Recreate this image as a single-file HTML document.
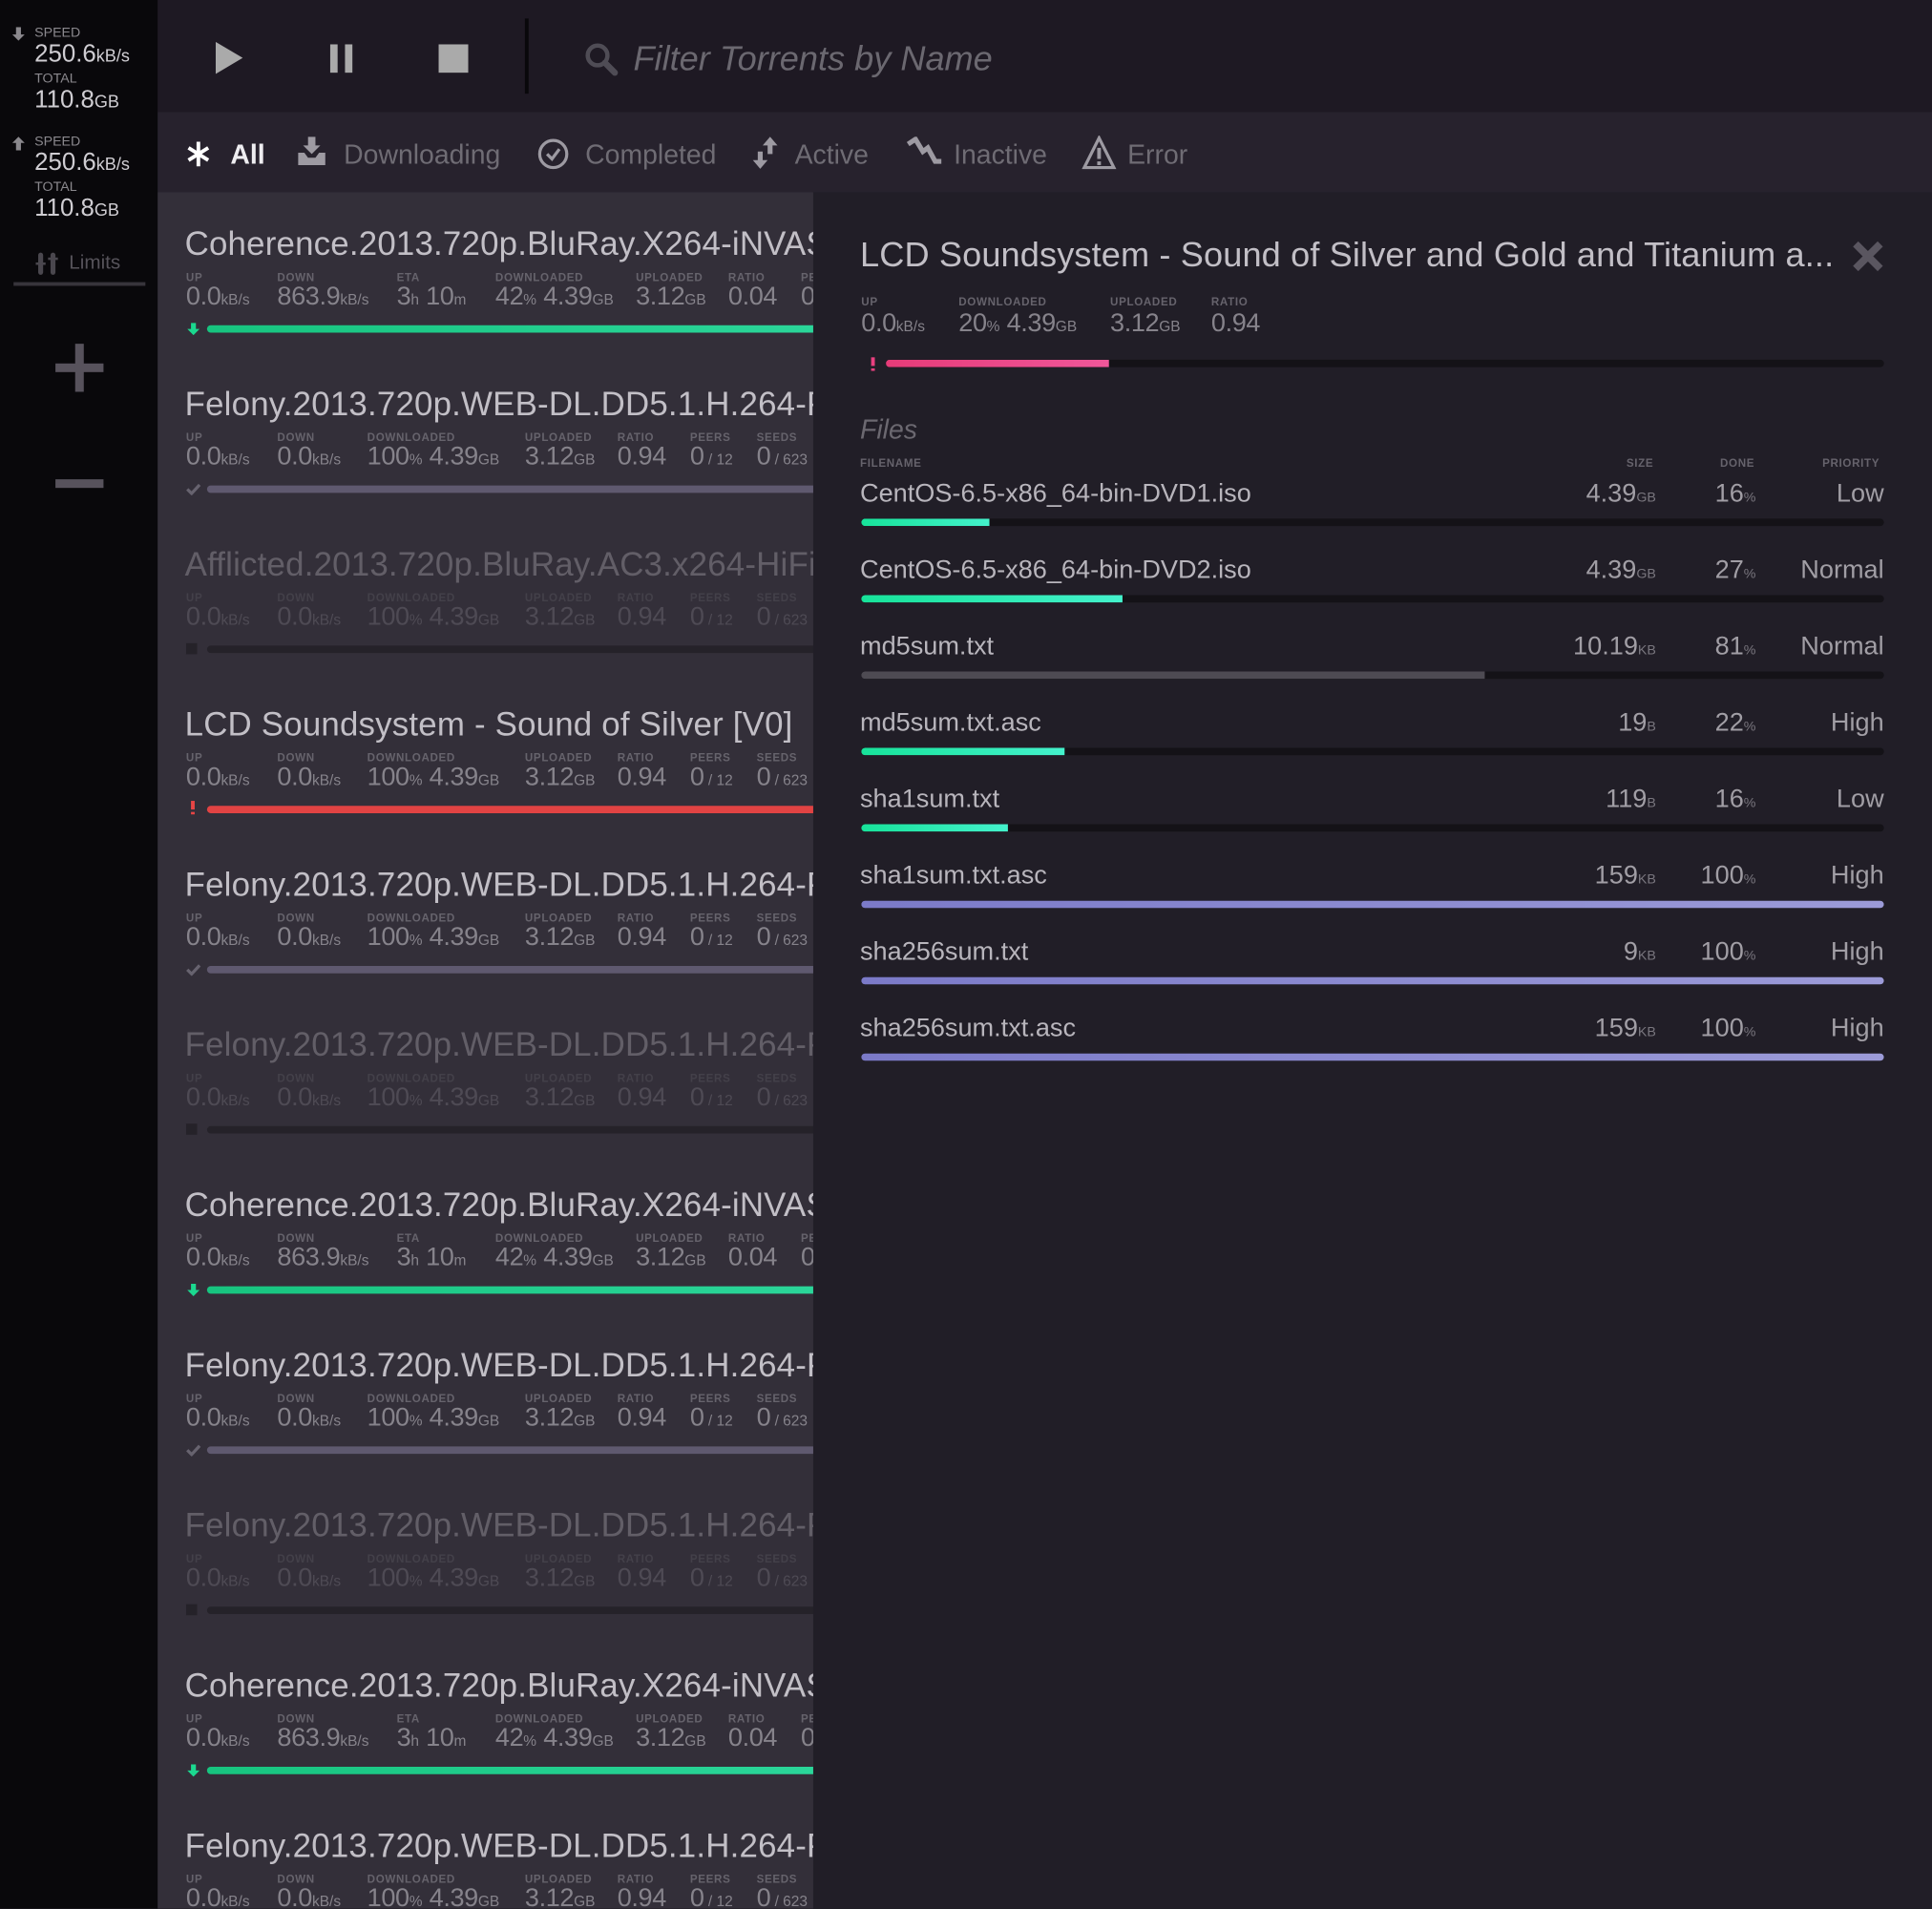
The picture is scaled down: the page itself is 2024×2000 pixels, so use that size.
<!DOCTYPE html>
<html><head><meta charset="utf-8">
<style>
html,body{margin:0;padding:0;background:#211e27;overflow:hidden;width:2024px;height:2000px}
#w{position:absolute;left:0;top:0;width:1568px;height:1549px;transform:scale(1.29082);transform-origin:0 0;font-family:"Liberation Sans",sans-serif;overflow:hidden;background:#211e27}
.a{position:absolute}
.lbl{position:absolute;font-size:9px;font-weight:bold;letter-spacing:.5px;color:#66636c;white-space:nowrap}
.val{position:absolute;font-size:21px;color:#86838b;white-space:nowrap;letter-spacing:-.3px}
.val small{font-size:12px;letter-spacing:0}
.row{position:absolute;left:128px;width:532px;height:130px;overflow:hidden}
.nm{position:absolute;left:22px;top:27px;font-size:27px;color:#c2bfc6;white-space:nowrap;letter-spacing:.15px}
.bar{position:absolute;left:40px;top:108px;width:500px;height:6px;border-radius:3px}
.fade{opacity:.33}
.fr{position:absolute;font-size:21px;color:#a19ea5;text-align:right;white-space:nowrap}
.fr small{font-size:11px;color:#7a777f}
.tr{position:absolute;left:699px;width:830px;height:6px;border-radius:3px;background:#141217;overflow:hidden}
.tr i{display:block;height:6px;border-radius:3px 0 0 3px}
.g{background:linear-gradient(90deg,#17e39a,#44f2cc)}
.p{background:linear-gradient(90deg,#7b7ac8,#9c9bd8)}
.gr{background:#4e4b53}
.flt{position:absolute;top:113px;font-size:22px;color:#6f6c74;white-space:nowrap}
</style></head><body><div id="w">

<div class="a" style="left:0;top:0;width:128px;height:1549px;background:#09080b"></div>
<svg class="a" style="left:9px;top:22px" width="12" height="12" viewBox="0 0 12 12"><path d="M4 0h4v6h3L6 11 1 6h3z" fill="#8a888d"/></svg>
<div class="a" style="left:28px;top:21px;font-size:11px;color:#8a888d">SPEED</div>
<div class="a" style="left:28px;top:33px;font-size:20px;color:#cfcdd2">250.6<span style="font-size:14px">kB/s</span></div>
<div class="a" style="left:28px;top:58px;font-size:11px;color:#8a888d">TOTAL</div>
<div class="a" style="left:28px;top:70px;font-size:20px;color:#cfcdd2">110.8<span style="font-size:14px">GB</span></div>
<svg class="a" style="left:9px;top:110px" width="12" height="12" viewBox="0 0 12 12"><path d="M4 12h4V6h3L6 1 1 6h3z" fill="#8a888d"/></svg>
<div class="a" style="left:28px;top:109px;font-size:11px;color:#8a888d">SPEED</div>
<div class="a" style="left:28px;top:121px;font-size:20px;color:#cfcdd2">250.6<span style="font-size:14px">kB/s</span></div>
<div class="a" style="left:28px;top:146px;font-size:11px;color:#8a888d">TOTAL</div>
<div class="a" style="left:28px;top:158px;font-size:20px;color:#cfcdd2">110.8<span style="font-size:14px">GB</span></div>
<svg class="a" style="left:29px;top:204px" width="20" height="20" viewBox="0 0 20 20"><rect x="2" y="1" width="4" height="18" rx="2" fill="#4a474e"/><rect x="12" y="1" width="4" height="18" rx="2" fill="#4a474e"/><rect x="0" y="9" width="8" height="2" fill="#4a474e"/><rect x="10" y="5" width="8" height="2" fill="#4a474e"/></svg>
<div class="a" style="left:56px;top:205px;font-size:16px;color:#56535a">Limits</div>
<div class="a" style="left:11px;top:229px;width:107px;height:3px;background:#37343b"></div>
<div class="a" style="left:45px;top:295px;width:39px;height:7px;background:#57525c"></div>
<div class="a" style="left:61px;top:279px;width:7px;height:39px;background:#57525c"></div>
<div class="a" style="left:45px;top:389px;width:39px;height:7px;background:#57525c"></div>

<div class="a" style="left:128px;top:0;width:1440px;height:91px;background:#1e1923"></div>
<svg class="a" style="left:175px;top:34px" width="22" height="26"><path d="M0 0L22 13L0 26z" fill="#aaa"/></svg>
<div class="a" style="left:268px;top:36px;width:6px;height:23px;background:#aaa"></div>
<div class="a" style="left:280px;top:36px;width:6px;height:23px;background:#aaa"></div>
<div class="a" style="left:356px;top:36px;width:24px;height:23px;background:#aaa"></div>
<div class="a" style="left:426px;top:15px;width:3px;height:61px;background:#09080b"></div>
<svg class="a" style="left:474px;top:34px" width="28" height="28" viewBox="0 0 28 28"><circle cx="11" cy="11" r="8" fill="none" stroke="#4f4c55" stroke-width="3.5"/><path d="M17 17l8 8" stroke="#4f4c55" stroke-width="5" stroke-linecap="round"/></svg>
<div class="a" style="left:514px;top:32px;font-size:28px;font-style:italic;color:#6b6870">Filter Torrents by Name</div>

<div class="a" style="left:128px;top:91px;width:1440px;height:65px;background:#27222d"></div>
<svg class="a" style="left:151px;top:114px" width="20" height="22" viewBox="0 0 20 22"><path d="M10 1v20M2 6l16 10M18 6L2 16" stroke="#fff" stroke-width="3"/></svg>
<div class="flt" style="left:187px;color:#eeedf0;font-weight:bold">All</div>
<svg class="a" style="left:241px;top:111px" width="24" height="24" viewBox="0 0 24 24"><path d="M9 0h6v7h4l-7 7-7-7h4z" fill="#9d9aa2"/><path d="M1 13h5l3 4h6l3-4h5v10H1z" fill="#9d9aa2"/></svg>
<div class="flt" style="left:279px">Downloading</div>
<svg class="a" style="left:436px;top:112px" width="26" height="26"><circle cx="13" cy="13" r="11" fill="none" stroke="#9d9aa2" stroke-width="2.5"/><path d="M8 13l4 4 6-8" fill="none" stroke="#9d9aa2" stroke-width="2.5"/></svg>
<div class="flt" style="left:475px">Completed</div>
<svg class="a" style="left:610px;top:111px" width="24" height="26" viewBox="0 0 24 26"><path d="M15 0l6 7h-4v7h-4V7H9zM7 26L1 19h4v-7h4v7h4z" fill="#9d9aa2"/></svg>
<div class="flt" style="left:645px">Active</div>
<svg class="a" style="left:735px;top:111px" width="30" height="28" viewBox="0 0 30 28"><path d="M2 6L8 2l6 10 4-3 6 11h5" fill="none" stroke="#9d9aa2" stroke-width="4"/></svg>
<div class="flt" style="left:774px">Inactive</div>
<svg class="a" style="left:878px;top:110px" width="28" height="28" viewBox="0 0 28 28"><path d="M14 2L26 26H2z" fill="none" stroke="#9d9aa2" stroke-width="2.5"/><rect x="12.5" y="10" width="3" height="9" fill="#9d9aa2"/><rect x="12.5" y="21" width="3" height="3" fill="#9d9aa2"/></svg>
<div class="flt" style="left:915px">Error</div>

<div class="a" style="left:128px;top:156px;width:532px;height:1393px;background:#332f39"></div>

<div id="list"></div>

<div class="a" style="left:698px;top:191px;font-size:28px;color:#c2bfc6;white-space:nowrap;letter-spacing:.1px">LCD Soundsystem - Sound of Silver and Gold and Titanium a...</div>
<svg class="a" style="left:1503px;top:195px" width="26" height="26" viewBox="0 0 26 26"><path d="M3 3L23 23M23 3L3 23" stroke="#5a5660" stroke-width="6"/></svg>
<div class="lbl" style="left:699px;top:240px">UP</div>
<div class="val" style="left:699px;top:251px">0.0<small>kB/s</small></div>
<div class="lbl" style="left:778px;top:240px">DOWNLOADED</div>
<div class="val" style="left:778px;top:251px">20<small>%</small> 4.39<small>GB</small></div>
<div class="lbl" style="left:901px;top:240px">UPLOADED</div>
<div class="val" style="left:901px;top:251px">3.12<small>GB</small></div>
<div class="lbl" style="left:983px;top:240px">RATIO</div>
<div class="val" style="left:983px;top:251px">0.94</div>
<div class="a" style="left:707px;top:290px;width:3px;height:7px;background:#ea4080"></div>
<div class="a" style="left:707px;top:299px;width:3px;height:2px;background:#ea4080"></div>
<div class="a" style="left:719px;top:292px;width:810px;height:6px;border-radius:3px;background:#141217;overflow:hidden"><div style="width:181px;height:6px;background:linear-gradient(90deg,#e63b78,#f0579a)"></div></div>

<div class="a" style="left:698px;top:336px;font-size:22px;font-style:italic;color:#6b6870">Files</div>
<div class="lbl" style="left:698px;top:371px">FILENAME</div>
<div class="lbl" style="left:1320px;top:371px">SIZE</div>
<div class="lbl" style="left:1396px;top:371px">DONE</div>
<div class="lbl" style="left:1479px;top:371px">PRIORITY</div>
<div id="files"></div>

<script>
var L='',rows=[
['A','Coherence.2013.720p.BluRay.X264-iNVASiON'],
['B','Felony.2013.720p.WEB-DL.DD5.1.H.264-PHD'],
['C','Afflicted.2013.720p.BluRay.AC3.x264-HiFi'],
['D','LCD Soundsystem - Sound of Silver [V0]'],
['B','Felony.2013.720p.WEB-DL.DD5.1.H.264-PHD'],
['C','Felony.2013.720p.WEB-DL.DD5.1.H.264-PHD'],
['A','Coherence.2013.720p.BluRay.X264-iNVASiON'],
['B','Felony.2013.720p.WEB-DL.DD5.1.H.264-PHD'],
['C','Felony.2013.720p.WEB-DL.DD5.1.H.264-PHD'],
['A','Coherence.2013.720p.BluRay.X264-iNVASiON'],
['B','Felony.2013.720p.WEB-DL.DD5.1.H.264-PHD']];
function st(x,l,v){return '<div class="lbl" style="left:'+x+'px;top:64px">'+l+'</div><div class="val" style="left:'+x+'px;top:73px">'+v+'</div>';}
rows.forEach(function(r,i){
 var t=r[0],h='<div class="row'+(t=='C'?' fade':'')+'" style="top:'+(156+i*130)+'px">';
 h+='<div class="nm">'+r[1]+'</div>';
 if(t=='A'){
  h+=st(23,'UP','0.0<small>kB/s</small>')+st(97,'DOWN','863.9<small>kB/s</small>')+st(194,'ETA','3<small>h</small> 10<small>m</small>')+st(274,'DOWNLOADED','42<small>%</small> 4.39<small>GB</small>')+st(388,'UPLOADED','3.12<small>GB</small>')+st(463,'RATIO','0.04')+st(522,'PEERS','0');
  h+='<svg class="a" style="left:24px;top:106px" width="10" height="10" viewBox="0 0 10 10"><path d="M3 0h4v5h3L5 10 0 5h3z" fill="#1bd88f"/></svg><div class="bar" style="background:linear-gradient(90deg,#17c47f,#2bd69a)"></div>';
 } else {
  h+=st(23,'UP','0.0<small>kB/s</small>')+st(97,'DOWN','0.0<small>kB/s</small>')+st(170,'DOWNLOADED','100<small>%</small> 4.39<small>GB</small>')+st(298,'UPLOADED','3.12<small>GB</small>')+st(373,'RATIO','0.94')+st(432,'PEERS','0<small> / 12</small>')+st(486,'SEEDS','0<small> / 623</small>');
  if(t=='B')h+='<svg class="a" style="left:23px;top:106px" width="12" height="10" viewBox="0 0 12 10"><path d="M1 5l3.5 3.5L11 1.5" fill="none" stroke="#67636f" stroke-width="2.5"/></svg><div class="bar" style="background:#5f596f"></div>';
  if(t=='C')h+='<div class="a" style="left:23px;top:106px;width:9px;height:9px;background:#09080b"></div><div class="bar" style="background:#09080b"></div>';
  if(t=='D')h+='<div class="a" style="left:27px;top:104px;width:3px;height:7px;background:#e84545"></div><div class="a" style="left:27px;top:113px;width:3px;height:2px;background:#e84545"></div><div class="bar" style="background:#e14343"></div>';
 }
 L+=h+'</div>';
});
document.getElementById('list').innerHTML=L;
var F='',files=[
['CentOS-6.5-x86_64-bin-DVD1.iso','4.39','GB','16','Low',104,'g'],
['CentOS-6.5-x86_64-bin-DVD2.iso','4.39','GB','27','Normal',212,'g'],
['md5sum.txt','10.19','KB','81','Normal',506,'gr'],
['md5sum.txt.asc','19','B','22','High',165,'g'],
['sha1sum.txt','119','B','16','Low',119,'g'],
['sha1sum.txt.asc','159','KB','100','High',830,'p'],
['sha256sum.txt','9','KB','100','High',830,'p'],
['sha256sum.txt.asc','159','KB','100','High',830,'p']];
files.forEach(function(f,i){
 var y=389+i*62;
 F+='<div class="a" style="left:698px;top:'+y+'px;font-size:21px;color:#b8b5bc;white-space:nowrap">'+f[0]+'</div>';
 F+='<div class="fr" style="right:224px;top:'+y+'px">'+f[1]+'<small>'+f[2]+'</small></div>';
 F+='<div class="fr" style="right:143px;top:'+y+'px">'+f[3]+'<small>%</small></div>';
 F+='<div class="fr" style="right:39px;top:'+y+'px">'+f[4]+'</div>';
 F+='<div class="tr" style="top:'+(y+32)+'px"><i class="'+f[6]+'" style="width:'+f[5]+'px'+(f[5]>=830?';border-radius:3px':'')+'"></i></div>';
});
document.getElementById('files').innerHTML=F;
</script>
</div></body></html>
